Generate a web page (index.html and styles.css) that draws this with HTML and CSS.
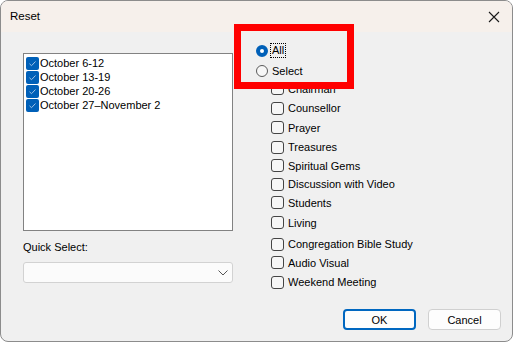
FILE: index.html
```html
<!DOCTYPE html>
<html lang="en">
<head>
  <meta charset="UTF-8">
  <title>Reset</title>
  <link rel="stylesheet" href="styles.css">
</head>
<body>

  <div class="window">
    <div class="titlebar">
      <span class="title">Reset</span>
      <svg class="close" width="12" height="12" viewBox="0 0 12 12">
        <path d="M1 1 L11 11 M11 1 L1 11" stroke="#1a1a1a" stroke-width="1.1" fill="none"/>
      </svg>
    </div>

    <div class="content">
      <!-- Semanas -->
      <div class="left">
        <div class="listbox">
          <div class="list-item"><span class="tick"><svg width="13" height="13" viewBox="0 0 13 13"><path d="M3.5 6.8 L5.5 8.7 L9.5 4.5" stroke="#9fc2e6" stroke-width="1" fill="none"/></svg></span>October 6-12</div>
          <div class="list-item"><span class="tick"><svg width="13" height="13" viewBox="0 0 13 13"><path d="M3.5 6.8 L5.5 8.7 L9.5 4.5" stroke="#9fc2e6" stroke-width="1" fill="none"/></svg></span>October 13-19</div>
          <div class="list-item"><span class="tick"><svg width="13" height="13" viewBox="0 0 13 13"><path d="M3.5 6.8 L5.5 8.7 L9.5 4.5" stroke="#9fc2e6" stroke-width="1" fill="none"/></svg></span>October 20-26</div>
          <div class="list-item"><span class="tick"><svg width="13" height="13" viewBox="0 0 13 13"><path d="M3.5 6.8 L5.5 8.7 L9.5 4.5" stroke="#9fc2e6" stroke-width="1" fill="none"/></svg></span>October 27–November 2</div>
        </div>

        <div class="quick-label">Quick Select:</div>
        <div class="combo">
          <svg width="10" height="6" viewBox="0 0 10 6"><path d="M0.5 0.5 L5 5 L9.5 0.5" stroke="#555" stroke-width="1" fill="none"/></svg>
        </div>
      </div>

      <!-- Opcoes -->
      <div class="right">
        <div class="radio-row"><span class="radio checked"></span><span class="focus">All</span></div>
        <div class="radio-row"><span class="radio"></span>Select</div>

        <div class="checks">
          <div class="check-row"><span class="box"></span>Chairman</div>
          <div class="check-row sp1"><span class="box"></span>Counsellor</div>
          <div class="check-row sp1"><span class="box"></span>Prayer</div>
          <div class="check-row sp1"><span class="box"></span>Treasures</div>
          <div class="check-row"><span class="box"></span>Spiritual Gems</div>
          <div class="check-row"><span class="box"></span>Discussion with Video</div>
          <div class="check-row"><span class="box"></span>Students</div>
          <div class="check-row sp2"><span class="box"></span>Living</div>
          <div class="check-row sp3"><span class="box"></span>Congregation Bible Study</div>
          <div class="check-row"><span class="box"></span>Audio Visual</div>
          <div class="check-row sp1"><span class="box"></span>Weekend Meeting</div>
        </div>
      </div>
    </div>

    <div class="footer">
      <button class="btn default">OK</button>
      <button class="btn">Cancel</button>
    </div>

    <!-- marcacao em vermelho -->
    <div class="highlight"></div>
  </div>

</body>
</html>
```

FILE: styles.css
```css
/* Geral */
body {
  margin: 0;
  background: #ffffff;
  font-family: "Liberation Sans", Arial, sans-serif;
  font-size: 11px;
  color: #000;
}

.window {
  position: relative;
  width: 511px;
  height: 340px;
  background: #f0f0f0;
  border: 1px solid #8c8c8c;
  border-radius: 8px;
  overflow: hidden;
  display: flex;
  flex-direction: column;
}

/* Barra de titulo */
.titlebar {
  height: 31px;
  background: #f6f0eb;
  display: flex;
  align-items: center;
  justify-content: space-between;
  padding: 0 10px 0 9px;
}

.title {
  font-size: 11.5px;
  margin-top: -1px;
}

.close {
  margin-right: 2px;
}

/* Conteudo */
.content {
  display: flex;
}

.left {
  width: 210px;
  margin-left: 22px;
  margin-top: 21px;
}

.listbox {
  height: 172px;
  background: #fff;
  border: 1px solid #828282;
  padding: 2px;
}

.list-item {
  height: 14px;
  display: flex;
  align-items: center;
  line-height: 14px;
}

.tick {
  width: 13px;
  height: 13px;
  background: #0060b8;
  border-radius: 2px;
  margin-right: 1px;
  display: flex;
}

.quick-label {
  margin-top: 8px;
  height: 16px;
  line-height: 16px;
}

.combo {
  margin-top: 7px;
  height: 19px;
  background: #fbfbfb;
  border: 1px solid #d2d2d2;
  border-radius: 3px;
  display: flex;
  align-items: center;
  justify-content: flex-end;
  padding-right: 4px;
}

.right {
  margin-left: 23px;
  margin-top: 12px;
}

.radio-row {
  height: 13px;
  display: flex;
  align-items: center;
  margin-bottom: 7px;
}

.radio {
  width: 10px;
  height: 10px;
  border: 1px solid #5a5a5a;
  border-radius: 50%;
  background: #f7f7f7;
  margin-right: 4px;
  box-sizing: content-box;
}

.radio.checked {
  width: 4px;
  height: 4px;
  border: 4px solid #0060b8;
  background: #fff;
}

.focus {
  outline: 1px dotted #000;
  line-height: 13px;
  padding: 0 1px;
  margin-left: -1px;
}

.checks {
  margin-left: 15px;
  margin-top: -2px;
  display: flex;
  flex-direction: column;
  gap: 5.5px;
}

.check-row {
  height: 13px;
  display: flex;
  align-items: center;
}

.check-row.sp1 { margin-top: 1px; }
.check-row.sp2 { margin-top: 1.5px; }
.check-row.sp3 { margin-top: 3px; }

.box {
  width: 11px;
  height: 11px;
  border: 1px solid #444;
  border-radius: 3px;
  background: #f6f6f6;
  margin-right: 4px;
}

/* Botoes */
.footer {
  margin-top: auto;
  display: flex;
  justify-content: flex-end;
  gap: 12px;
  padding: 0 11px 11px 0;
}

.btn {
  width: 73px;
  height: 21px;
  font-family: inherit;
  font-size: 11px;
  color: #000;
  background: #fdfdfd;
  border: 1px solid #d0d0d0;
  border-radius: 4px;
  padding: 0;
}

.btn.default {
  border: 2px solid #0067c0;
}

.highlight {
  position: absolute;
  left: 233px;
  top: 23px;
  width: 106px;
  height: 51px;
  border: 7px solid #ff0000;
  box-sizing: content-box;
}
```
